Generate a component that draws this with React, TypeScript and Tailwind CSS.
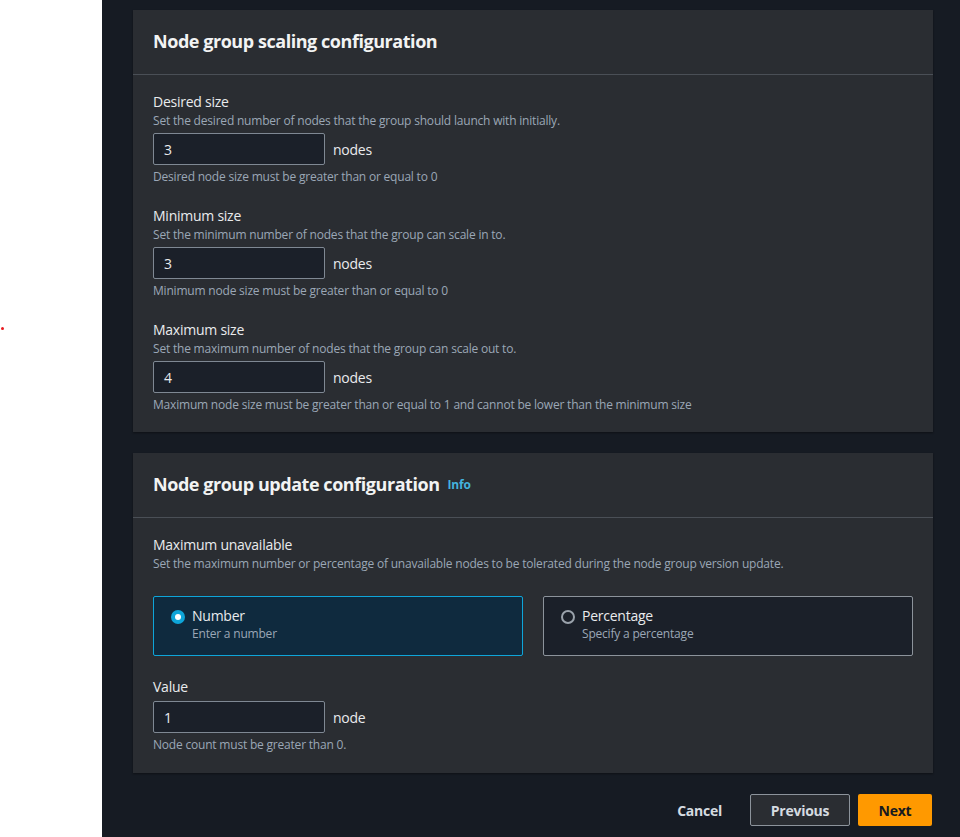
import React from "react";

const font = { fontFamily: '"Open Sans", "Noto Sans", sans-serif' };

function Field({
  label,
  desc,
  value,
  unit,
  hint,
}: {
  label: string;
  desc?: string;
  value: string;
  unit: string;
  hint: string;
}) {
  return (
    <div className="flex flex-col">
      <div className="text-[14px] leading-[18px] tracking-[-0.25px] text-[#e9ebed]">{label}</div>
      {desc ? (
        <div className="mt-[2px] text-[12px] leading-[16px] tracking-[-0.2px] text-[#9ba7b6]">{desc}</div>
      ) : null}
      <div className={`${desc ? "mt-[4px]" : "mt-[5px]"} flex items-center`}>
        <div className="flex h-[32px] w-[172px] items-center rounded-[2px] border border-[#7f8893] bg-[#1b2029] pl-[10px] text-[14px] text-[#e9ebed]">
          {value}
        </div>
        <span className="ml-[8px] text-[14px] tracking-[-0.25px] text-[#e9ebed]">{unit}</span>
      </div>
      <div className="mt-[4px] text-[12px] leading-[16px] tracking-[-0.2px] text-[#9ba7b6]">{hint}</div>
    </div>
  );
}

function Card({ title, info, children }: { title: string; info?: boolean; children: React.ReactNode }) {
  return (
    <div className="w-[800px] bg-[#2a2d32] shadow-[0_1px_2px_rgba(0,0,0,0.4)]">
      <div className="flex h-[65px] items-center border-b border-[#4a4f56] px-[20px] pb-[2px]">
        <span className="text-[18px] font-bold leading-[24px] tracking-[-0.45px] text-[#f2f3f3]">{title}</span>
        {info ? (
          <span className="ml-[8px] mt-[2px] text-[12px] font-bold tracking-[-0.2px] text-[#44b3de]">Info</span>
        ) : null}
      </div>
      {children}
    </div>
  );
}

export default function App() {
  return (
    <div className="relative flex h-[837px] w-[960px] bg-white" style={font}>
      <div className="absolute left-[1px] top-[327px] h-[3px] w-[3px] rounded-full bg-[#e8191f]" />
      <div className="w-[102px] shrink-0" />
      <div className="flex flex-1 flex-col bg-[#161b23] pl-[31px] pt-[10px]">
        <Card title="Node group scaling configuration">
          <div className="flex flex-col gap-[22px] px-[20px] pb-[19px] pt-[18px]">
            <Field
              label="Desired size"
              desc="Set the desired number of nodes that the group should launch with initially."
              value="3"
              unit="nodes"
              hint="Desired node size must be greater than or equal to 0"
            />
            <Field
              label="Minimum size"
              desc="Set the minimum number of nodes that the group can scale in to."
              value="3"
              unit="nodes"
              hint="Minimum node size must be greater than or equal to 0"
            />
            <Field
              label="Maximum size"
              desc="Set the maximum number of nodes that the group can scale out to."
              value="4"
              unit="nodes"
              hint="Maximum node size must be greater than or equal to 1 and cannot be lower than the minimum size"
            />
          </div>
        </Card>
        <div className="mt-[21px]">
          <Card title="Node group update configuration" info>
            <div className="flex flex-col px-[20px] pb-[20px] pt-[18px]">
              <div className="text-[14px] leading-[18px] tracking-[-0.25px] text-[#e9ebed]">Maximum unavailable</div>
              <div className="mt-[2px] text-[12px] leading-[16px] tracking-[-0.2px] text-[#9ba7b6]">
                Set the maximum number or percentage of unavailable nodes to be tolerated during the node group version update.
              </div>
              <div className="mt-[24px] grid grid-cols-2 gap-[20px]">
                <div className="flex h-[60px] items-start rounded-[2px] border border-[#0ea5d9] bg-[#0f2a3e] pl-[17px] pt-[10px]">
                  <span className="mt-[3px] flex h-[14px] w-[14px] items-center justify-center rounded-full bg-[#0ea5d9]">
                    <span className="h-[6px] w-[6px] rounded-full bg-white" />
                  </span>
                  <div className="ml-[7px] flex flex-col">
                    <span className="text-[14px] leading-[18px] tracking-[-0.25px] text-[#e9ebed]">Number</span>
                    <span className="text-[12px] leading-[18px] tracking-[-0.2px] text-[#9ba7b6]">Enter a number</span>
                  </div>
                </div>
                <div className="flex h-[60px] items-start rounded-[2px] border border-[#8c939b] bg-[#1b2029] pl-[17px] pt-[10px]">
                  <span className="mt-[3px] h-[14px] w-[14px] rounded-full border-2 border-[#9aa2ab]" />
                  <div className="ml-[7px] flex flex-col">
                    <span className="text-[14px] leading-[18px] tracking-[-0.25px] text-[#e9ebed]">Percentage</span>
                    <span className="text-[12px] leading-[18px] tracking-[-0.2px] text-[#9ba7b6]">Specify a percentage</span>
                  </div>
                </div>
              </div>
              <div className="mt-[22px]">
                <Field label="Value" value="1" unit="node" hint="Node count must be greater than 0." />
              </div>
            </div>
          </Card>
        </div>
        <div className="mt-[21px] flex w-[800px] items-center justify-end">
          <span className="mr-[28px] text-[14px] font-bold tracking-[-0.25px] text-[#d5dbe0]">Cancel</span>
          <div className="flex h-[32px] w-[100px] items-center justify-center rounded-[2px] border border-[#8c939b] bg-[#2a2d32] text-[14px] font-bold tracking-[-0.25px] text-[#d5dbe0]">
            Previous
          </div>
          <div className="ml-[8px] mr-[1px] flex h-[32px] w-[74px] items-center justify-center rounded-[2px] bg-[#ff9900] text-[14px] font-bold tracking-[-0.25px] text-[#16191f]">
            Next
          </div>
        </div>
      </div>
    </div>
  );
}
